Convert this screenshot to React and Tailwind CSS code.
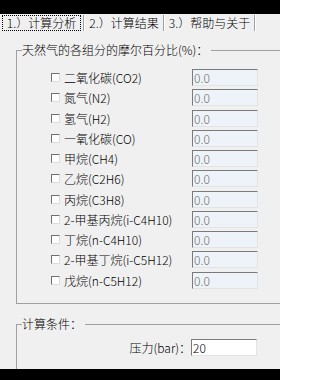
import React from "react";

const rows = [
  { label: "二氧化碳(CO2)", mt: 0 },
  { label: "氮气(N2)", mt: 3 },
  { label: "氢气(H2)", mt: 4 },
  { label: "一氧化碳(CO)", mt: 3 },
  { label: "甲烷(CH4)", mt: 3 },
  { label: "乙烷(C2H6)", mt: 3 },
  { label: "丙烷(C3H8)", mt: 4 },
  { label: "2-甲基丙烷(i-C4H10)", mt: 3 },
  { label: "丁烷(n-C4H10)", mt: 3 },
  { label: "2-甲基丁烷(i-C5H12)", mt: 3 },
  { label: "戊烷(n-C5H12)", mt: 4 },
];

function Sep() {
  return (
    <div className="flex h-[16px] w-[2px]">
      <div className="w-px h-full bg-[#a0a0a0]" />
      <div className="w-px h-full bg-white" />
    </div>
  );
}

function GroupHeader({ title }) {
  return (
    <div className="flex h-[16px] shrink-0">
      <div className="w-[6px] flex flex-col">
        <div className="h-[8px]" />
        <div className="flex-1 border-t border-l border-[#a0a0a0]" />
      </div>
      <span className="pr-[3px] whitespace-nowrap leading-4">{title}</span>
      <div className="flex-1 flex flex-col">
        <div className="h-[8px]" />
        <div className="border-t border-[#a0a0a0]" />
      </div>
    </div>
  );
}

export default function App() {
  const font = { fontFamily: '"Noto Sans CJK SC", "Noto Sans", sans-serif' };
  return (
    <div
      className="w-[280px] h-[380px] bg-[#f0f0f0] flex flex-col overflow-hidden text-[12px] leading-4 text-black font-light"
      style={font}
    >
      <div className="h-[14px] bg-black shrink-0" />
      <div className="h-[19px] shrink-0 flex items-start pt-[1px] pl-[2px]">
        <div className="w-[79px] h-[16px] border border-dotted border-black flex items-center justify-center whitespace-nowrap">
          1.）计算分析
        </div>
        <div className="w-[2px]" />
        <Sep />
        <div className="w-[78px] h-[16px] flex items-center justify-center whitespace-nowrap">
          2.）计算结果
        </div>
        <Sep />
        <div className="w-[89px] h-[16px] flex items-center justify-center whitespace-nowrap">
          3.）帮助与关于
        </div>
        <Sep />
      </div>

      <div className="mt-[9px] ml-[16px] flex flex-col shrink-0">
        <GroupHeader title="天然气的各组分的摩尔百分比(%)：" />
        <div className="border-l border-b border-[#a0a0a0] pt-[11px] pb-[14px] flex flex-col">
          {rows.map((r, i) => (
            <div
              key={i}
              className="flex items-center h-[17px]"
              style={{ marginTop: r.mt }}
            >
              <div className="ml-[34px] w-[9px] h-[9px] border border-t-[#707070] border-l-[#707070] border-r-[#dcdcdc] border-b-[#dcdcdc] bg-white shrink-0" />
              <div className="ml-[4px] w-[128px] whitespace-nowrap">{r.label}</div>
              <div className="w-[66px] h-[17px] border border-t-[#7a7a7a] border-l-[#7a7a7a] border-r-[#e3e3e3] border-b-[#e3e3e3] bg-[#eef3f9] text-[#6d6d6d] pl-[1px] leading-[15px]">
                0.0
              </div>
            </div>
          ))}
        </div>
      </div>

      <div className="mt-[12px] ml-[16px] flex flex-col flex-1">
        <GroupHeader title="计算条件：" />
        <div className="flex-1 border-l border-[#a0a0a0] pt-[7px]">
          <div className="flex items-center h-[17px]">
            <div className="w-[174px] text-right whitespace-nowrap">压力(bar)：</div>
            <div className="w-[66px] h-[17px] border border-t-[#7a7a7a] border-l-[#7a7a7a] border-r-[#e3e3e3] border-b-[#e3e3e3] bg-white pl-[1px] leading-[15px]">
              20
            </div>
          </div>
        </div>
      </div>

      <div className="h-[11px] bg-black shrink-0" />
    </div>
  );
}
